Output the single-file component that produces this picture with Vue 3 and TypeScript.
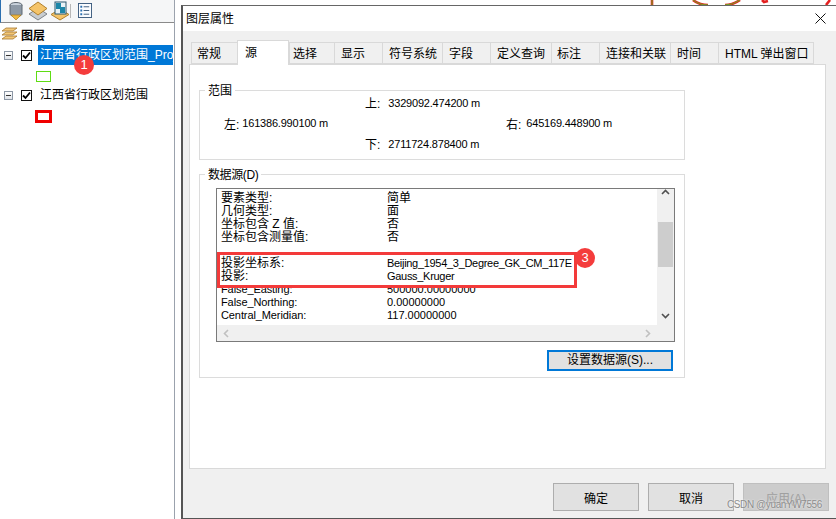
<script setup lang="ts">
const tabs = [
  { label: '常规', width: 46, pad: 5 },
  { label: '源', width: 52, active: true, pad: 7 },
  { label: '选择', width: 45, pad: 3 },
  { label: '显示', width: 48, pad: 6 },
  { label: '符号系统', width: 60, pad: 6 },
  { label: '字段', width: 48, pad: 6 },
  { label: '定义查询', width: 61, pad: 6 },
  { label: '标注', width: 48, pad: 5 },
  { label: '连接和关联', width: 71, pad: 6 },
  { label: '时间', width: 48, pad: 6 },
  { label: 'HTML 弹出窗口', width: 96, pad: 6 },
]
const rowsTop = [
  ['要素类型:', '简单'],
  ['几何类型:', '面'],
  ['坐标包含 Z 值:', '否'],
  ['坐标包含测量值:', '否'],
  ['\u00a0', ''],
  ['投影坐标系:', 'Beijing_1954_3_Degree_GK_CM_117E'],
  ['投影:', 'Gauss_Kruger'],
  ['False_Easting:', '500000.00000000'],
  ['False_Northing:', '0.00000000'],
  ['Central_Meridian:', '117.00000000'],
]
</script>

<template>
  <div class="screen">
    <aside class="side">
      <div class="toolbar">
        <svg class="tool" width="20" height="20" viewBox="0 0 20 20">
          <ellipse cx="10" cy="4" rx="6" ry="2.5" fill="#c9d2dc" stroke="#5c6670" />
          <path d="M4 4v9c0 1.500 3 2.500 6 2.500s6-1 6-2.500V4" fill="#8d99a6" stroke="#5c6670" />
          <path d="M5 14h10l-5 5z" fill="#f0b840" stroke="#a87a20" stroke-width=".7" />
        </svg>
        <svg class="tool" width="20" height="20" viewBox="0 0 20 20">
          <path d="M10 7l9 6-9 6-9-6z" fill="#c8ccd0" stroke="#7c8288" />
          <path d="M10 1l9 6.500-9 6.500-9-6.500z" fill="#f5c469" stroke="#b0802c" />
        </svg>
        <svg class="tool" width="20" height="20" viewBox="0 0 20 20">
          <path d="M10 8l9 5.500-9 5.500-9-5.500z" fill="#f5c469" stroke="#b0802c" />
          <rect x="5" y="1" width="11" height="12" fill="#e8f2f6" stroke="#28566e" />
          <path d="M6 2h5v4h4v6H10V8H6z" fill="#1c86a8" />
        </svg>
        <span class="sep"></span>
        <svg class="tool list" width="14" height="15" viewBox="0 0 15 16">
          <rect x=".5" y=".5" width="14" height="15" fill="#fafcff" stroke="#38587c" />
          <path d="M6 4h6M6 8h6M6 12h6" stroke="#38587c" />
          <path d="M2.500 4h2M2.500 8h2M2.500 12h2" stroke="#2b6fb0" stroke-width="2" />
        </svg>
      </div>
      <div class="tree">
        <div class="root-row">
          <svg width="17" height="14" viewBox="0 0 17 14">
            <path d="M5 1h11l-4 3H1z" fill="#f3c878" stroke="#a87a30" stroke-width=".8" />
            <path d="M5 5h11l-4 3H1z" fill="#f3c878" stroke="#a87a30" stroke-width=".8" />
            <path d="M5 9h11l-4 3H1z" fill="#f3c878" stroke="#a87a30" stroke-width=".8" />
          </svg>
          <span class="root-text">图层</span>
        </div>
        <div class="layer-row first">
          <span class="expander"></span>
          <span class="check"><svg width="9" height="9" viewBox="0 0 9 9"><path d="M1 4.500l2.500 2.500L8 1.500" fill="none" stroke="#000" stroke-width="1.800" /></svg></span>
          <span class="layer-name selected">江西省行政区划范围_Proj</span>
        </div>
        <div class="legend-row"><span class="swatch green"></span></div>
        <div class="layer-row">
          <span class="expander"></span>
          <span class="check"><svg width="9" height="9" viewBox="0 0 9 9"><path d="M1 4.500l2.500 2.500L8 1.500" fill="none" stroke="#000" stroke-width="1.800" /></svg></span>
          <span class="layer-name">江西省行政区划范围</span>
        </div>
        <div class="legend-row"><span class="swatch red"></span></div>
      </div>
    </aside>

    <section class="dialog">
      <header class="titlebar">
        <span class="title">图层属性</span>
        <svg width="11" height="11" viewBox="0 0 11 11"><path d="M.5.5l10 10M10.500.5l-10 10" stroke="#111" stroke-width="1" /></svg>
      </header>
      <div class="body">
        <div class="tabs">
          <div v-for="t in tabs" :key="t.label" class="tab" :class="{ active: t.active }" :style="{ width: t.width + 'px', paddingLeft: t.pad + 'px' }">{{ t.label }}</div>
        </div>
        <div class="panel">
          <div class="group extent">
            <span class="legend">范围</span>
            <div class="extent-grid">
              <div class="cell col2"><span class="cjk">上:</span><span class="val wide">3329092.474200 m</span></div>
              <div class="cell col1"><span class="cjk">左:</span><span class="val">161386.990100 m</span></div>
              <div class="cell col3"><span class="cjk">右:</span><span class="val mid">645169.448900 m</span></div>
              <div class="cell col2 row3"><span class="cjk">下:</span><span class="val wide">2711724.878400 m</span></div>
            </div>
          </div>
          <div class="group source">
            <span class="legend tight">数据源(D)</span>
            <div class="textbox">
              <div class="content">
                <div v-for="r in rowsTop" :key="r[0]" class="data-row">
                  <span class="k">{{ r[0] }}</span><span class="v">{{ r[1] }}</span>
                </div>
              </div>
              <div class="vbar">
                <svg width="9" height="6" viewBox="0 0 9 6"><path d="M1 5l3.500-3.500L8 5" fill="none" stroke="#505050" stroke-width="1.600" /></svg>
                <span class="thumb"></span>
                <svg width="9" height="6" viewBox="0 0 9 6"><path d="M1 1l3.500 3.500L8 1" fill="none" stroke="#505050" stroke-width="1.600" /></svg>
              </div>
              <div class="hbar">
                <svg width="6" height="9" viewBox="0 0 6 9"><path d="M5 1L1.500 4.500 5 8" fill="none" stroke="#c0c0c0" stroke-width="1.600" /></svg>
                <svg width="6" height="9" viewBox="0 0 6 9"><path d="M1 1l3.500 3.500L1 8" fill="none" stroke="#c0c0c0" stroke-width="1.600" /></svg>
              </div>
              <div class="corner"></div>
            </div>
            <div class="source-action"><button class="btn focus">设置数据源(S)...</button></div>
          </div>
        </div>
        <div class="footer">
          <button class="btn action">确定</button>
          <button class="btn action">取消</button>
          <button class="btn action off">应用(A)</button>
        </div>
      </div>
    </section>

    <svg class="map" width="196" height="5" viewBox="0 0 196 5">
      <g fill="none" stroke-width="2.600" stroke="#e42020">
        <path d="M12 0v5" />
        <path d="M53 0q6 5 15 5" />
        <path d="M85 5q8 0 15-5" />
        <path d="M122 0l2 2 4-1" />
        <path d="M186 5l4-5" />
      </g>
      <g fill="none" stroke-width=".9" stroke="#58c020">
        <path d="M12 0v5" />
        <path d="M53 0q6 5 15 5" />
        <path d="M85 5q8 0 15-5" />
      </g>
    </svg>

    <div class="redbox"></div>
    <span class="badge b1">1</span>
    <span class="badge b2">2</span>
    <span class="badge b3">3</span>
    <span class="watermark">CSDN @yuanYW7556</span>
  </div>
</template>

<style scoped>
.screen {
  position: relative;
  display: flex;
  width: 836px;
  height: 519px;
  overflow: hidden;
  background: #fff;
  font-family: "Liberation Sans", "Noto Sans CJK SC", sans-serif;
  font-size: 12px;
  color: #000;
}
.side {
  width: 175px;
  flex: none;
  border-right: 1px solid #9ba2ad;
  box-sizing: border-box;
}
.toolbar {
  height: 23px;
  box-sizing: border-box;
  display: flex;
  align-items: center;
  padding: 0 0 1px 5px;
  gap: 2px;
  background: #f5f6f7;
  border-bottom: 1px solid #8a8a8a;
  border-left: 1px solid #2b6fb0;
}
.tool.list { margin-left: 5px; }
.sep { width: 1px; height: 14px; background: #b8b8b8; margin-left: -2px; }
.tree { padding-top: 2px; }
.root-row { display: flex; align-items: center; height: 18px; padding-left: 1px; gap: 3px; }
.root-text { font-weight: 700; }
.layer-row { display: flex; align-items: center; height: 20px; padding-left: 4px; }
.layer-row.first { margin-top: 2px; }
.expander {
  position: relative;
  width: 9px;
  height: 9px;
  border: 1px solid #8c97a5;
  background: linear-gradient(#fff, #dfe3e8);
  margin-right: 8px;
  flex: none;
  box-sizing: border-box;
}
.expander::after { content: ""; position: absolute; left: 1px; right: 1px; top: 3px; height: 1px; background: #333; }
.check {
  width: 11px;
  height: 11px;
  box-sizing: border-box;
  border: 1px solid #111;
  background: #fff;
  display: flex;
  align-items: center;
  justify-content: center;
  margin-right: 6px;
  flex: none;
}
.layer-name { height: 20px; line-height: 20px; padding-left: 2px; white-space: nowrap; overflow: hidden; }
.layer-name.selected { background: #0078d7; color: #fff; width: 135px; flex: none; box-sizing: border-box; }
.legend-row { height: 20px; padding: 2px 0 0 36px; box-sizing: border-box; display: flex; align-items: center; }
.swatch { display: block; box-sizing: border-box; }
.swatch.green { width: 15px; height: 11px; border: 1px solid #5fdc14; }
.swatch.red { width: 17px; height: 13px; margin-left: -1px; border: 3px solid #f00000; }

.dialog {
  margin: 5px 0 0 6px;
  flex: 1;
  height: 514px;
  box-sizing: border-box;
  border-top: 1px solid #666;
  border-left: 2px solid #555;
  border-bottom: 1px solid #555;
  display: flex;
  flex-direction: column;
  background: #f0f0f0;
}
.titlebar {
  height: 25px;
  flex: none;
  background: #fff;
  display: flex;
  align-items: center;
  justify-content: space-between;
  padding: 0 10px 0 3px;
}
.title { margin-top: -2px; }
.body { flex: 1; display: flex; flex-direction: column; padding: 11px 10px 0 6px; }
.tabs { display: flex; height: 22px; padding-left: 2px; position: relative; z-index: 1; }
.tab {
  box-sizing: border-box;
  height: 22px;
  line-height: 22px;
  border: 1px solid #d9d9d9;
  border-right: 0;
  white-space: nowrap;
  flex: none;
}
.tab:last-child { border-right: 1px solid #d9d9d9; }
.tab.active {
  background: #fff;
  height: 25px;
  margin-top: -2px;
  line-height: 25px;
  border-right: 1px solid #d9d9d9;
  border-bottom: 0;
}
.panel {
  height: 405px;
  box-sizing: border-box;
  background: #fff;
  border: 1px solid #d9d9d9;
  padding: 25px 0 0 9px;
  display: flex;
  flex-direction: column;
  gap: 14px;
}
.group { position: relative; width: 486px; box-sizing: border-box; border: 1px solid #dcdcdc; }
.legend { position: absolute; left: 5px; top: -8px; background: #fff; padding: 0 3px; line-height: 16px; }
.legend.tight { letter-spacing: -.4px; }
.extent { height: 70px; }
.extent-grid {
  display: grid;
  grid-template-columns: 141px 141px 1fr;
  grid-template-rows: 21px 20px 21px;
  padding: 1px 0 0 24px;
  align-items: center;
}
.cell { display: flex; align-items: center; white-space: nowrap; }
.col1 { grid-column: 1; grid-row: 2; }
.col2 { grid-column: 2; grid-row: 1; }
.col3 { grid-column: 3; grid-row: 2; }
.row3 { grid-row: 3; }
.val { font-size: 11px; margin-left: 3px; letter-spacing: -.2px; }
.val.wide { margin-left: 8px; }
.val.mid { margin-left: 5px; }
.source { height: 204px; padding: 13px 0 0 16px; }
.textbox {
  width: 459px;
  height: 154px;
  box-sizing: border-box;
  border: 1px solid #7a7a7a;
  display: grid;
  grid-template-columns: 1fr 17px;
  grid-template-rows: 1fr 16px;
}
.content { padding: 3px 0 0 4px; overflow: hidden; }
.data-row { display: grid; grid-template-columns: 166px 1fr; height: 13px; line-height: 13px; white-space: nowrap; font-size: 12px; }
.v { font-size: 12px; }
.data-row:nth-child(n+6) .v { font-size: 11px; letter-spacing: -.3px; }
.data-row:nth-child(n+8) .v { letter-spacing: 0; }
.data-row:nth-child(n+8) .k { font-size: 11px; letter-spacing: -.1px; }
.vbar {
  background: #f0f0f0;
  display: flex;
  flex-direction: column;
  align-items: center;
}
.thumb { display: block; width: 15px; height: 45px; background: #cdcdcd; margin-top: 27px; margin-bottom: auto; }
.vbar svg:last-child { margin-bottom: 6px; }
.hbar {
  background: #f0f0f0;
  display: flex;
  align-items: center;
  justify-content: space-between;
  padding: 0 6px;
}
.corner { background: #f0f0f0; }
.source-action { display: flex; justify-content: flex-end; width: 457px; margin-top: 8px; }
.btn {
  font: inherit;
  color: #000;
  padding: 0;
  background: #e1e1e1;
  border: 1px solid #adadad;
  box-sizing: border-box;
}
.btn.focus { width: 126px; height: 21px; border: 2px solid #0078d7; line-height: 15px; }
.footer { display: flex; justify-content: flex-end; gap: 9px; margin-top: 14px; margin-right: -3px; }
.btn.action { width: 86px; height: 28px; }
.btn.off { background: #ccc; color: #a0a0a0; border-color: #bfbfbf; }

.map { position: absolute; left: 640px; top: 0; }
.redbox {
  position: absolute;
  left: 217px;
  top: 252px;
  width: 360px;
  height: 36px;
  box-sizing: border-box;
  border: 3px solid #f33a3a;
  pointer-events: none;
}
.badge {
  position: absolute;
  width: 20px;
  height: 20px;
  border-radius: 50%;
  background: #f43c3c;
  color: #fff;
  font-size: 13px;
  line-height: 20px;
  text-align: center;
}
.b1 { left: 74px; top: 55px; }
.b2 { left: 257px; top: 43px; }
.b3 { left: 575px; top: 248px; }
.watermark {
  position: absolute;
  left: 727px;
  top: 498px;
  font-size: 10px;
  line-height: 14px;
  letter-spacing: -.4px;
  color: #8c8c8c;
  text-shadow: 0 0 2px #fff;
  white-space: nowrap;
}
</style>
